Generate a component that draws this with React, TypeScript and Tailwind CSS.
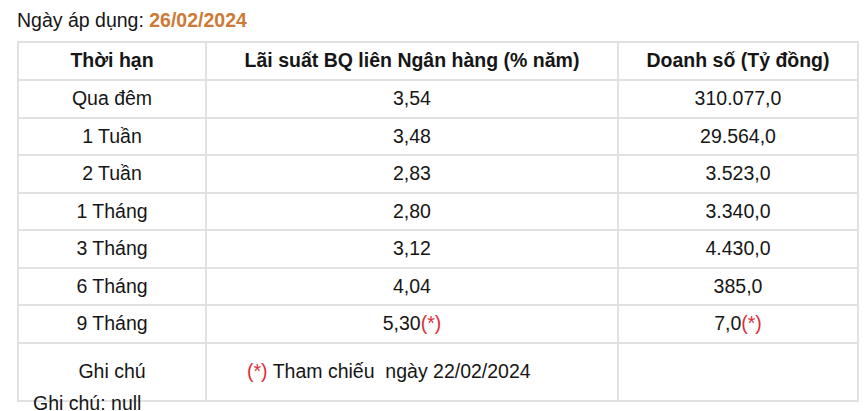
const rows = [
  { term: "Qua đêm", rate: "3,54", volume: "310.077,0" },
  { term: "1 Tuần", rate: "3,48", volume: "29.564,0" },
  { term: "2 Tuần", rate: "2,83", volume: "3.523,0" },
  { term: "1 Tháng", rate: "2,80", volume: "3.340,0" },
  { term: "3 Tháng", rate: "3,12", volume: "4.430,0" },
  { term: "6 Tháng", rate: "4,04", volume: "385,0" },
  { term: "9 Tháng", rate: "5,30", volume: "7,0", ref: true },
];

const cell = "border-2 border-[#e2e0e0] text-center align-middle p-0";

export default function App() {
  return (
    <div
      className="w-[866px] h-[411px] overflow-hidden bg-white text-[#161616] text-[19.5px]"
      style={{ fontFamily: '"Liberation Sans", Arial, sans-serif' }}
    >
      <p className="pl-[17px] pt-[7px] h-[41px] leading-[26px]">
        Ngày áp dụng: <b className="text-[#cd7a36]">26/02/2024</b>
      </p>

      <table className="ml-[17px] w-[840px] table-fixed border-collapse">
        <colgroup>
          <col className="w-[188px]" />
          <col className="w-[412px]" />
          <col className="w-[240px]" />
        </colgroup>
        <thead>
          <tr className="h-[38px]">
            <th className={cell + " font-bold"}>Thời hạn</th>
            <th className={cell + " font-bold"}>Lãi suất BQ liên Ngân hàng (% năm)</th>
            <th className={cell + " font-bold"}>Doanh số (Tỷ đồng)</th>
          </tr>
        </thead>
        <tbody>
          {rows.map((r) => (
            <tr key={r.term} className="h-[37.5px]">
              <td className={cell}>{r.term}</td>
              <td className={cell}>
                {r.rate}
                {r.ref && <span className="text-[#d9303c]">(*)</span>}
              </td>
              <td className={cell}>
                {r.volume}
                {r.ref && <span className="text-[#d9303c]">(*)</span>}
              </td>
            </tr>
          ))}
          <tr className="h-[58px]">
            <td className={cell}>Ghi chú</td>
            <td className={cell + " text-left pl-[40px]"}>
              <span className="text-[#d9303c]">(*)</span> Tham chiếu&nbsp; ngày 22/02/2024
            </td>
            <td className={cell}></td>
          </tr>
        </tbody>
      </table>

      <p className="relative pl-[33px] -mt-[10px] leading-[22px]">Ghi chú: null</p>
    </div>
  );
}
